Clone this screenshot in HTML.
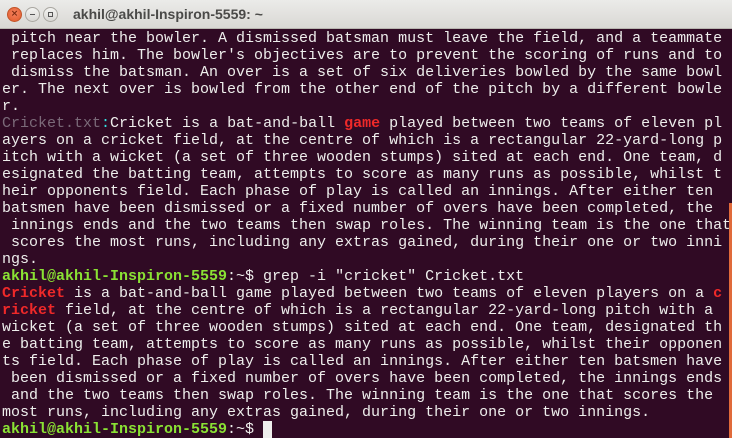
<!DOCTYPE html>
<html><head><meta charset="utf-8"><style>
*{margin:0;padding:0}
html,body{width:732px;height:438px;overflow:hidden;background:#300a24}
#tb{position:absolute;left:0;top:0;width:732px;height:28px;background:linear-gradient(#ebebe9,#d9d8d4);border-bottom:1px solid #b8b6b0}
.b{position:absolute;top:7px;width:15px;height:15px;border-radius:50%;box-sizing:border-box}
#c{left:7px;background:radial-gradient(circle at 50% 40%,#f5825f,#e05a2a);border:1px solid #c25428;color:#7a2a10;font:bold 9px "DejaVu Sans",sans-serif;text-align:center;line-height:13px}
#m,#x{background:linear-gradient(#f3f3f1,#d8d7d3);border:1px solid #a9a7a1}
#m{left:25px}#x{left:43px}
#m:after{content:"";position:absolute;left:4px;top:6px;width:5px;height:1px;background:#555}
#x:after{content:"";position:absolute;left:4px;top:4px;width:5px;height:5px;border:1px solid #555;box-sizing:border-box}
#t{position:absolute;left:73px;top:6px;font:bold 14px "Liberation Sans",sans-serif;color:#4a4a48}
pre{position:absolute;left:2px;top:30px;font:15px/17px "Liberation Mono",monospace;color:#eeeeec;white-space:pre}
.r{color:#ef2929;font-weight:bold}.g{color:#8ae234;font-weight:bold}.p{color:#7b6a79}.cy{color:#34e2e2}
.cur{background:#eeeeec}
#sb{position:absolute;left:729px;top:203px;width:3px;height:235px;background:#e06a3a}
</style></head><body>
<div id="tb"><div class="b" id="c">×</div><div class="b" id="m"></div><div class="b" id="x"></div><div id="t">akhil@akhil-Inspiron-5559: ~</div></div>
<pre> pitch near the bowler. A dismissed batsman must leave the field, and a teammate
 replaces him. The bowler's objectives are to prevent the scoring of runs and to
 dismiss the batsman. An over is a set of six deliveries bowled by the same bowl
er. The next over is bowled from the other end of the pitch by a different bowle
r.
<span class="p">Cricket.txt</span><span class="cy">:</span>Cricket is a bat-and-ball <span class="r">game</span> played between two teams of eleven pl
ayers on a cricket field, at the centre of which is a rectangular 22-yard-long p
itch with a wicket (a set of three wooden stumps) sited at each end. One team, d
esignated the batting team, attempts to score as many runs as possible, whilst t
heir opponents field. Each phase of play is called an innings. After either ten
batsmen have been dismissed or a fixed number of overs have been completed, the
 innings ends and the two teams then swap roles. The winning team is the one that
 scores the most runs, including any extras gained, during their one or two inni
ngs.
<span class="g">akhil@akhil-Inspiron-5559</span>:~$ grep -i "cricket" Cricket.txt
<span class="r">Cricket</span> is a bat-and-ball game played between two teams of eleven players on a <span class="r">c</span>
<span class="r">ricket</span> field, at the centre of which is a rectangular 22-yard-long pitch with a
wicket (a set of three wooden stumps) sited at each end. One team, designated th
e batting team, attempts to score as many runs as possible, whilst their opponen
ts field. Each phase of play is called an innings. After either ten batsmen have
 been dismissed or a fixed number of overs have been completed, the innings ends
 and the two teams then swap roles. The winning team is the one that scores the
most runs, including any extras gained, during their one or two innings.
<span class="g">akhil@akhil-Inspiron-5559</span>:~$ <span class="cur"> </span></pre>
<div id="sb"></div>
</body></html>
